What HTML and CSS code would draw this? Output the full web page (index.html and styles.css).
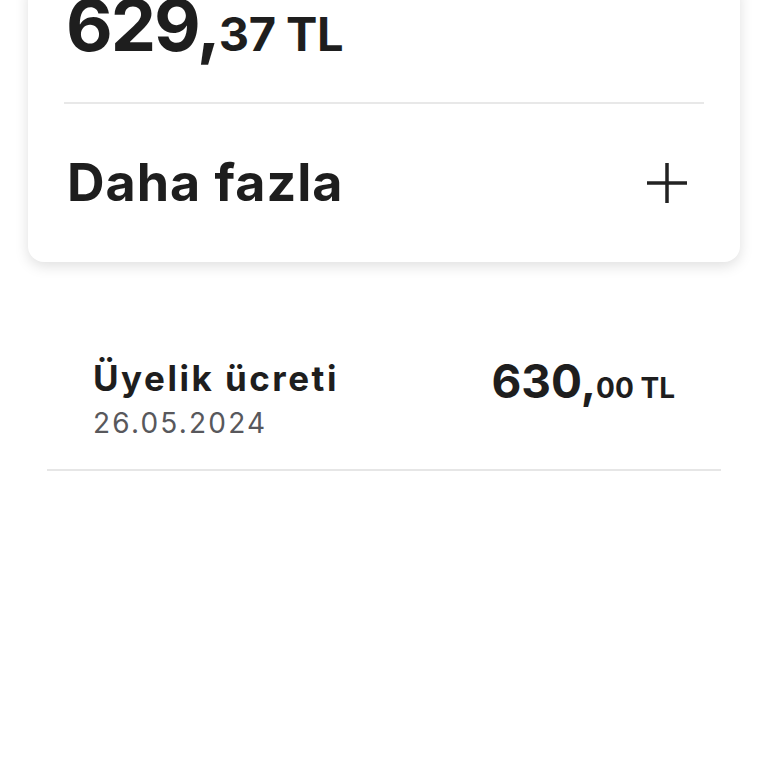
FILE: index.html
```html
<!DOCTYPE html>
<html lang="tr">

<head>
    <meta charset="utf-8">
    <title>Hesap özeti</title>
    <link rel="stylesheet" href="styles.css">
</head>

<body>
    <div class="card">
        <div class="balance">
            <span class="int">629,</span><span class="dec">37 TL</span>
        </div>
        <div class="more">
            <span>Daha fazla</span>
            <svg class="plus" width="42" height="42" viewBox="0 0 42 42">
                <path d="M21 1V41M1 21H41" stroke="#222" stroke-width="3.5" fill="none" />
            </svg>
        </div>
    </div>

    <ul class="tx-list">
        <li class="tx">
            <div>
                <div class="tx-title">Üyelik ücreti</div>
                <div class="tx-date">26.05.2024</div>
            </div>
            <div class="tx-amount">
                <span class="int">630,</span><span class="dec">00 TL</span>
            </div>
        </li>
    </ul>
</body>

</html>
```

FILE: styles.css
```css
body {
    margin: 0;
    background: #fff;
    color: #1e1e1e;
    font-family: Inter, Roboto, "Liberation Sans", sans-serif;
    overflow: hidden;
}

.card {
    margin: -12px 28px 0;
    padding: 0 36px;
    background: #fff;
    border-radius: 0 0 16px 16px;
    box-shadow: 0 4px 14px rgba(0, 0, 0, 0.13);
}

.balance {
    font-size: 72px;
    font-weight: 700;
    line-height: 74px;
    padding: 0 2px 40px;
    border-bottom: 2px solid #e8e8e8;
}

.balance .int {
    letter-spacing: -2px;
}

.balance .dec {
    font-size: 47px;
    line-height: 40px;
    letter-spacing: -0.5px;
}

.more {
    display: flex;
    align-items: center;
    justify-content: space-between;
    padding: 51px 0 51px 3px;
    font-size: 52px;
    font-weight: 700;
    line-height: 56px;
    letter-spacing: 1px;
}

.plus {
    margin-right: 16px;
}

.tx-list {
    list-style: none;
    margin: 60px 47px 0;
    padding: 0;
}

.tx {
    display: flex;
    justify-content: space-between;
    align-items: flex-start;
    padding: 36px 46px 29px;
    border-bottom: 2px solid #e6e6e6;
}

.tx-title {
    font-size: 35px;
    font-weight: 700;
    line-height: 40px;
    letter-spacing: 2.5px;
}

.tx-date {
    margin-top: 8px;
    font-size: 28px;
    line-height: 34px;
    letter-spacing: 2.2px;
    color: #58585c;
}

.tx-amount {
    font-size: 46px;
    font-weight: 700;
    line-height: 46px;
}

.tx-amount .dec {
    font-size: 28px;
    line-height: 28px;
}
```
